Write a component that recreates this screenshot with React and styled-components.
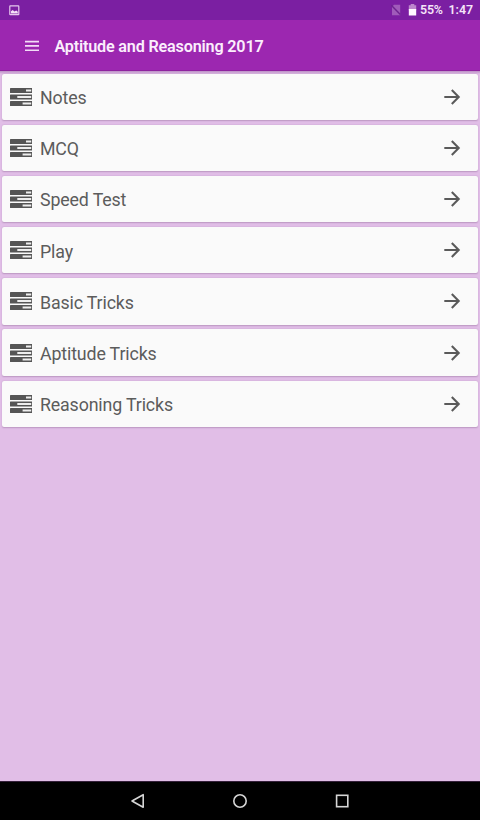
import React from "react";
import styled, { createGlobalStyle } from "styled-components";

const GlobalStyle = createGlobalStyle`
  * { box-sizing: border-box; }
  body { margin: 0; background: #e1bee7; font-family: Roboto, "Liberation Sans", sans-serif; }
`;

const Screen = styled.div`
  width: 480px;
  height: 820px;
  display: flex;
  flex-direction: column;
  overflow: hidden;
  background: #e1bee7;
`;

const StatusBar = styled.div`
  height: 20px;
  flex: none;
  display: flex;
  align-items: center;
  padding: 0 6.5px 0 9px;
  background: #7b1fa2;
  color: #f4e4f8;
`;

const StatusIcons = styled.div`
  display: flex;
  align-items: center;
  gap: 7px;
  margin-left: auto;
`;

const StatusValues = styled.div`
  display: flex;
  margin-left: -4px;
`;

const StatusText = styled.span`
  font-size: 12.4px;
  line-height: 20px;
  font-weight: 600;
  white-space: nowrap;
  width: ${(p) => p.$width}px;
  margin-left: ${(p) => p.$gap}px;
  letter-spacing: ${(p) => p.$spacing}px;
`;

const AppBar = styled.header`
  height: 51px;
  flex: none;
  display: flex;
  align-items: center;
  padding: 1px 0 0 25px;
  background: #9c27b0;
  border-bottom: 1px solid #8e229f;
`;

const Title = styled.h1`
  margin: 2px 0 0 15.4px;
  font-size: 16.2px;
  line-height: 20px;
  font-weight: 600;
  letter-spacing: -0.19px;
  color: #fbeefd;
  white-space: nowrap;
`;

const List = styled.main`
  flex: 1;
  display: flex;
  flex-direction: column;
  gap: 4.8px;
  padding: 2.5px 1.6px 0;
  background: linear-gradient(#b98fc4, #e1bee7 3px);
`;

const Card = styled.div`
  height: 46.4px;
  display: flex;
  align-items: center;
  padding: 0 17px 0 8.4px;
  border-radius: 2px;
  background: #fafafa;
  box-shadow: 0 0.5px 1.5px rgba(70, 30, 85, 0.25);
`;

const Label = styled.span`
  flex: 1;
  margin: 2.6px 0 0 7.5px;
  font-size: 17.8px;
  line-height: 24px;
  letter-spacing: -0.14px;
  color: #5c5c5c;
`;

const NavBar = styled.nav`
  height: 39px;
  flex: none;
  display: flex;
  align-items: center;
  justify-content: center;
  gap: 82px;
  background: #000;
  border-top: 1px solid #35203a;
`;

const Icon = styled.svg`
  display: block;
  flex: none;
`;

const PictureIcon = () => (
  <Icon width="11" height="11" viewBox="0 0 11 11">
    <rect x=".8" y=".9" width="9" height="8.8" rx=".5" fill="none" stroke="#e6c8ed" strokeWidth="1.2" />
    <path d="M2 8.5V6.3l1.7-1.2 1.8 1.4 1.7-1 1.6 1.3v1.7z" fill="#f3e2f7" />
  </Icon>
);

const NoSimIcon = () => (
  <Icon width="10" height="12" viewBox="0 0 10 12">
    <path d="M3 .8h6.2v10.4H1V3z" fill="#a05bba" />
    <path d="M.3 1.3l9 9.3" stroke="#6d238f" strokeWidth="1.4" />
  </Icon>
);

const BatteryIcon = () => (
  <Icon width="9" height="12" viewBox="0 0 9 12">
    <path d="M2.7 0h3.6v1.2h1.9v5H.8v-5h1.9z" fill="#bd86cd" />
    <path d="M.8 5h7.4v6.5H.8z" fill="#fff6ff" />
  </Icon>
);

const MenuIcon = () => (
  <Icon width="14" height="12" viewBox="0 0 14 12">
    <path d="M0 1.6h14M0 5.9h14M0 10.2h14" stroke="#f2dcf6" strokeWidth="1.6" />
  </Icon>
);

const TasksIcon = () => (
  <Icon width="22.5" height="18" viewBox="0 0 22.5 18">
    <g fill="#555">
      <rect width="22.5" height="4.9" rx=".5" />
      <rect y="6.5" width="22.5" height="4.9" rx=".5" />
      <rect y="13" width="22.5" height="4.9" rx=".5" />
    </g>
    <path d="M16 1.4h5.2v2H16zM7.3 7.9h13.9v2H7.3zM12.6 14.4h8.6v2h-8.6z" fill="#eee" />
  </Icon>
);

const ArrowIcon = () => (
  <Icon width="18" height="18" viewBox="0 0 18 18">
    <path d="M1.3 9h14M8.8 2.1L15.7 9l-6.9 6.9" fill="none" stroke="#5a5a5a" strokeWidth="2.1" />
  </Icon>
);

const BackIcon = () => (
  <Icon width="20" height="20" viewBox="0 0 20 20">
    <path d="M15.2 3.7v12.6L4 10z" fill="none" stroke="#d5d5d5" strokeWidth="1.6" strokeLinejoin="round" />
  </Icon>
);

const HomeIcon = () => (
  <Icon width="20" height="20" viewBox="0 0 20 20">
    <circle cx="10" cy="10" r="6.2" fill="none" stroke="#d5d5d5" strokeWidth="1.6" />
  </Icon>
);

const RecentsIcon = () => (
  <Icon width="20" height="20" viewBox="0 0 20 20">
    <rect x="4.6" y="4.3" width="11.2" height="11.4" fill="none" stroke="#d5d5d5" strokeWidth="1.6" />
  </Icon>
);

const items = ["Notes", "MCQ", "Speed Test", "Play", "Basic Tricks", "Aptitude Tricks", "Reasoning Tricks"];

export default function App() {
  return (
    <Screen>
      <GlobalStyle />
      <StatusBar>
        <PictureIcon />
        <StatusIcons>
          <NoSimIcon />
          <BatteryIcon />
          <StatusValues>
            <StatusText $width={23} $gap={0} $spacing={-0.2}>55%</StatusText>
            <StatusText $width={25} $gap={5.5} $spacing={0}>1:47</StatusText>
          </StatusValues>
        </StatusIcons>
      </StatusBar>
      <AppBar>
        <MenuIcon />
        <Title>Aptitude and Reasoning 2017</Title>
      </AppBar>
      <List>
        {items.map((name) => (
          <Card key={name}>
            <TasksIcon />
            <Label>{name}</Label>
            <ArrowIcon />
          </Card>
        ))}
      </List>
      <NavBar>
        <BackIcon />
        <HomeIcon />
        <RecentsIcon />
      </NavBar>
    </Screen>
  );
}
